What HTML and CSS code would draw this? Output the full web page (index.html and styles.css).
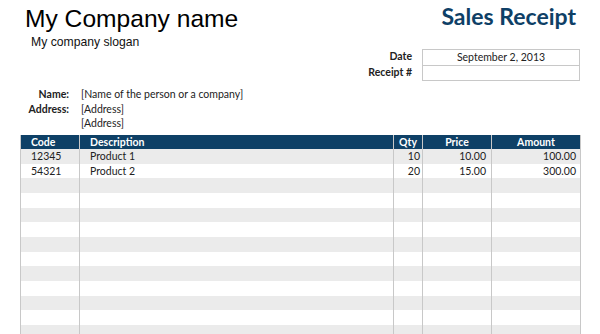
FILE: index.html
```html
<!DOCTYPE html>
<html>
<head>
<meta charset="utf-8">
<link rel="stylesheet" href="styles.css">
</head>
<body>
<div class="page">
  <div class="top">
    <div class="brand">
      <h1 class="company">My Company name</h1>
      <div class="slogan">My company slogan</div>
    </div>
    <div class="doc">
      <h2 class="title">Sales Receipt</h2>
      <div class="meta">
        <div class="meta-label">Date</div>
        <div class="meta-box">September 2, 2013</div>
        <div class="meta-label">Receipt #</div>
        <div class="meta-box last"></div>
      </div>
    </div>
  </div>
  <div class="customer">
    <div class="c-label">Name:</div><div class="c-value">[Name of the person or a company]</div>
    <div class="c-label">Address:</div><div class="c-value">[Address]</div>
    <div class="c-label"></div><div class="c-value">[Address]</div>
  </div>
  <table class="items">
    <colgroup>
      <col class="w-code"><col class="w-desc"><col class="w-qty"><col class="w-price"><col class="w-amount">
    </colgroup>
    <thead>
      <tr><th class="left">Code</th><th class="left">Description</th><th>Qty</th><th>Price</th><th>Amount</th></tr>
    </thead>
    <tbody>
      <tr><td>12345</td><td>Product 1</td><td class="num qty">10</td><td class="num price">10.00</td><td class="num amt">100.00</td></tr>
      <tr><td>54321</td><td>Product 2</td><td class="num qty">20</td><td class="num price">15.00</td><td class="num amt">300.00</td></tr>
      <tr><td></td><td></td><td></td><td></td><td></td></tr>
      <tr><td></td><td></td><td></td><td></td><td></td></tr>
      <tr><td></td><td></td><td></td><td></td><td></td></tr>
      <tr><td></td><td></td><td></td><td></td><td></td></tr>
      <tr><td></td><td></td><td></td><td></td><td></td></tr>
      <tr><td></td><td></td><td></td><td></td><td></td></tr>
      <tr><td></td><td></td><td></td><td></td><td></td></tr>
      <tr><td></td><td></td><td></td><td></td><td></td></tr>
      <tr><td></td><td></td><td></td><td></td><td></td></tr>
      <tr><td></td><td></td><td></td><td></td><td></td></tr>
      <tr><td></td><td></td><td></td><td></td><td></td></tr>
    </tbody>
  </table>
</div>
</body>
</html>
```
FILE: styles.css
```css
html, body {
  margin: 0;
  padding: 0;
  background: #fff;
  overflow: hidden;
}
body {
  width: 600px;
  height: 334px;
  font-family: Lato, "Open Sans", sans-serif;
  font-size: 10.5px;
  color: #222;
}
.page {
  padding: 0 20px;
  height: 334px;
  overflow: hidden;
}
.top {
  display: flex;
  justify-content: space-between;
  align-items: flex-start;
}
.brand {
  padding-left: 5px;
}
.company {
  margin: 5px 0 0;
  font-family: "Liberation Sans", Arial, sans-serif;
  font-weight: normal;
  font-size: 24.6px;
  line-height: 28px;
  color: #000;
}
.slogan {
  margin: 2px 0 0 6px;
  font-family: "Liberation Sans", Arial, sans-serif;
  font-size: 12.2px;
  line-height: 14px;
  color: #111;
}
.doc {
  display: flex;
  flex-direction: column;
  align-items: flex-end;
}
.title {
  margin: 3px 4px 0 0;
  font-family: Lato, sans-serif;
  font-weight: bold;
  font-size: 23px;
  line-height: 27px;
  color: #0e4066;
}
.meta {
  margin-top: 19px;
  display: grid;
  grid-template-columns: auto 158px;
  column-gap: 10px;
}
.meta-label {
  text-align: right;
  font-weight: bold;
  line-height: 15.5px;
}
.meta-box {
  border: 1px solid #c8c8c8;
  border-bottom: none;
  text-align: center;
  height: 14.5px;
  line-height: 15px;
}
.meta-box.last {
  border-bottom: 1px solid #c8c8c8;
}
.customer {
  margin-top: 6px;
  display: grid;
  grid-template-columns: 49px auto;
  column-gap: 12px;
  line-height: 14.5px;
}
.c-label {
  text-align: right;
  font-weight: bold;
}
.items {
  margin-top: 4px;
  width: 560px;
  table-layout: fixed;
  border-collapse: collapse;
}
.w-code { width: 59px; }
.w-desc { width: 314px; }
.w-qty { width: 29px; }
.w-price { width: 69px; }
.w-amount { width: 89px; }
.items th, .items td {
  height: 14.67px;
  padding: 0;
  border-left: 1px solid #c8c8c8;
  border-right: 1px solid #c8c8c8;
  white-space: nowrap;
  overflow: hidden;
}
.items th {
  background: #0e4066;
  color: #fff;
  font-weight: bold;
  text-align: center;
  line-height: 14px;
}
.items th.left {
  text-align: left;
  padding-left: 10px;
}
.items td {
  padding-left: 10px;
  line-height: 14px;
  vertical-align: middle;
}
.items tbody tr:nth-child(odd) td {
  background: #ebebeb;
}
.items td.num {
  text-align: right;
  padding-left: 0;
}
.items td.qty { padding-right: 2px; }
.items td.price { padding-right: 5px; }
.items td.amt { padding-right: 4px; }
```
